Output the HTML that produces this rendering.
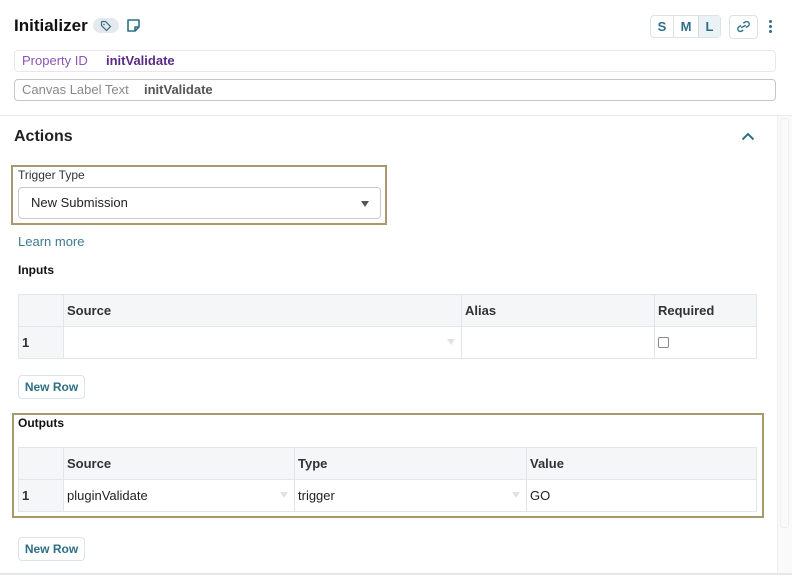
<!DOCTYPE html>
<html><head><meta charset="utf-8"><style>
*{box-sizing:border-box;margin:0;padding:0}
body{width:792px;height:575px;background:#fff;font-family:"Liberation Sans",sans-serif;position:relative;overflow:hidden;color:#222}
.a{position:absolute}
.tbl{position:absolute;left:18px;width:739px;border-collapse:collapse;font-size:13px}
.tbl td{border:1px solid #e3e6e8;height:32px;padding:0 3px;vertical-align:middle}
.tbl tr.h td{background:#f4f6f7;font-weight:bold;color:#333}
.tbl td.n{background:#f4f6f7;font-weight:bold;color:#333}
.btn{position:absolute;left:18px;width:67px;height:24px;border:1px solid #dde3e6;border-radius:4px;font-size:12px;font-weight:bold;color:#2f6f86;text-align:center;line-height:22px}
.tri{position:absolute;width:0;height:0;border-left:4px solid transparent;border-right:4px solid transparent;border-top:6px solid #e2e2e2}
</style></head><body>
<div class="a" style="left:14px;top:16px;font-size:17px;font-weight:bold;color:#111">Initializer</div>
<div class="a" style="left:93px;top:18px;width:26px;height:15px;border-radius:8px;background:#e3e9ee"></div>
<svg class="a" style="left:100px;top:20px" width="12" height="12" viewBox="0 0 12 12"><path d="M1.5 2v3.5l5 5 4-4-5-5H2z" fill="none" stroke="#3d6b80" stroke-width="1.2"/><circle cx="4" cy="4.5" r=".8" fill="#3d6b80"/></svg>
<svg class="a" style="left:126px;top:18px" width="15" height="15" viewBox="0 0 15 15"><path d="M2 2h11v7l-4 4H2z M9 13v-4h4" fill="none" stroke="#2f6f86" stroke-width="1.6" stroke-linejoin="round"/></svg>
<div class="a" style="left:650px;top:15px;width:71px;height:23px;border:1px solid #dbe3e6;border-radius:4px;display:flex;font-size:13px;font-weight:bold;color:#2f6f86">
<div style="width:23px;text-align:center;line-height:21px;border-right:1px solid #dbe3e6">S</div>
<div style="width:25px;text-align:center;line-height:21px;border-right:1px solid #cfdde3">M</div>
<div style="width:21px;text-align:center;line-height:21px;background:#eaf2f5">L</div></div>
<div class="a" style="left:729px;top:15px;width:29px;height:24px;border:1px solid #dbe3e6;border-radius:4px"></div>
<svg class="a" style="left:736px;top:20px" width="15" height="13" viewBox="0 0 15 13"><path d="M6 4.5l-2.5 0a2.5 2.5 0 0 0 0 5h2M9 3.5h2.5a2.5 2.5 0 0 1 0 5H9M5 6.5h5" fill="none" stroke="#2f6f86" stroke-width="1.4" transform="rotate(-30 7.5 6.5)"/></svg>
<div class="a" style="left:769px;top:20px;width:3px;height:3px;border-radius:50%;background:#2f6f86;box-shadow:0 5px 0 #2f6f86,0 10px 0 #2f6f86"></div>
<div class="a" style="left:14px;top:50px;width:762px;height:22px;border:1px solid #ece4f2;border-radius:4px;font-size:13px;line-height:20px">
<span class="a" style="left:7px;color:#8b55b8">Property ID</span><span class="a" style="left:91px;color:#5b2a86;font-weight:bold">initValidate</span></div>
<div class="a" style="left:14px;top:79px;width:762px;height:22px;border:1px solid #c4c7ca;border-radius:4px;font-size:13px;line-height:20px">
<span class="a" style="left:7px;color:#888">Canvas Label Text</span><span class="a" style="left:129px;color:#555;font-weight:bold">initValidate</span></div>
<div class="a" style="left:0;top:115px;width:792px;height:1px;background:#e8eaec"></div>
<div class="a" style="left:777px;top:116px;width:15px;height:459px;background:#fafafa;border-left:1px solid #eee"></div>
<div class="a" style="left:780px;top:118px;width:9px;height:410px;border:1px solid #eee;border-radius:3px"></div>
<div class="a" style="left:0;top:573px;width:792px;height:2px;background:#e4e8ea"></div>
<div class="a" style="left:14px;top:128px;font-size:16px;font-weight:bold;color:#222">Actions</div>
<svg class="a" style="left:741px;top:132px" width="14" height="9" viewBox="0 0 14 9"><path d="M1.5 7.5l5.5-5.5 5.5 5.5" fill="none" stroke="#2f6f86" stroke-width="2"/></svg>
<div class="a" style="left:11px;top:165px;width:376px;height:60px;border:2px solid #a89a6e"></div>
<div class="a" style="left:18px;top:168px;font-size:12px;color:#333">Trigger Type</div>
<div class="a" style="left:18px;top:187px;width:363px;height:32px;border:1px solid #c9ccce;border-radius:4px;font-size:13px;line-height:30px;padding-left:12px;color:#222">New Submission</div>
<div class="a" style="left:361px;top:201px;border-left:4.5px solid transparent;border-right:4.5px solid transparent;border-top:6px solid #555"></div>
<div class="a" style="left:18px;top:234px;font-size:13px;color:#3d7a90">Learn more</div>
<div class="a" style="left:18px;top:263px;font-size:12px;font-weight:bold;color:#111">Inputs</div>
<table class="tbl" style="top:294px"><tr class="h"><td style="width:45px"></td><td style="width:398px">Source</td><td style="width:193px">Alias</td><td>Required</td></tr>
<tr><td class="n">1</td><td></td><td></td><td><div style="width:11px;height:11px;border:1px solid #888;border-radius:2px"></div></td></tr></table>
<div class="tri" style="left:447px;top:339px"></div>
<div class="btn" style="top:375px">New Row</div>
<div class="a" style="left:12px;top:413px;width:752px;height:105px;border:2px solid #a89a6e"></div>
<div class="a" style="left:18px;top:416px;font-size:12px;font-weight:bold;color:#111">Outputs</div>
<table class="tbl" style="top:447px"><tr class="h"><td style="width:45px"></td><td style="width:231px">Source</td><td style="width:232px">Type</td><td>Value</td></tr>
<tr><td class="n">1</td><td>pluginValidate</td><td>trigger</td><td>GO</td></tr></table>
<div class="tri" style="left:280px;top:492px"></div>
<div class="tri" style="left:512px;top:492px"></div>
<div class="btn" style="top:537px">New Row</div>
</body></html>
